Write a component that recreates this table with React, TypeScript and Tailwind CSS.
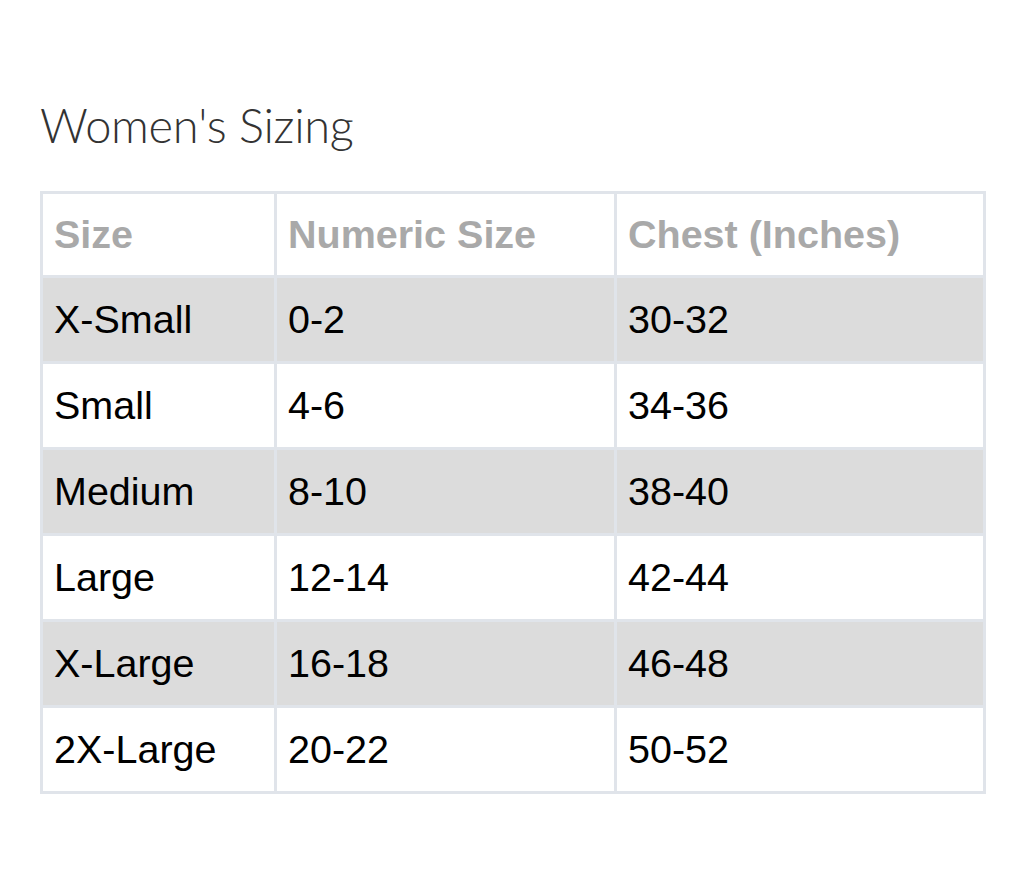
import React from "react";

const rows: [string, string, string][] = [
  ["X-Small", "0-2", "30-32"],
  ["Small", "4-6", "34-36"],
  ["Medium", "8-10", "38-40"],
  ["Large", "12-14", "42-44"],
  ["X-Large", "16-18", "46-48"],
  ["2X-Large", "20-22", "50-52"],
];

export default function App() {
  return (
    <div className="w-[1024px] h-[892px] bg-white pl-[40px] pt-[92px]">
      <h2 className="font-['Lato',sans-serif] font-light text-[47px] leading-[66px] text-[#333] tracking-[-0.3px]">
        Women's Sizing
      </h2>
      <table className="mt-[33px] w-[943px] border-collapse font-['Liberation_Sans',Arial,sans-serif] text-[39.5px] table-fixed">
        <colgroup>
          <col className="w-[234px]" />
          <col className="w-[340px]" />
          <col className="w-[369px]" />
        </colgroup>
        <thead>
          <tr className="h-[84px]">
            {["Size", "Numeric Size", "Chest (Inches)"].map((h) => (
              <th
                key={h}
                className="border-[3px] border-[#e0e4ea] px-[11px] text-left font-bold text-[#a9a9a9] align-middle"
              >
                {h}
              </th>
            ))}
          </tr>
        </thead>
        <tbody>
          {rows.map((r, i) => (
            <tr key={r[0]} className={`h-[86px] ${i % 2 === 0 ? "bg-[#dcdcdc]" : "bg-white"}`}>
              {r.map((c, j) => (
                <td key={j} className="border-[3px] border-[#e0e4ea] px-[11px] text-black align-middle">
                  {c}
                </td>
              ))}
            </tr>
          ))}
        </tbody>
      </table>
    </div>
  );
}
